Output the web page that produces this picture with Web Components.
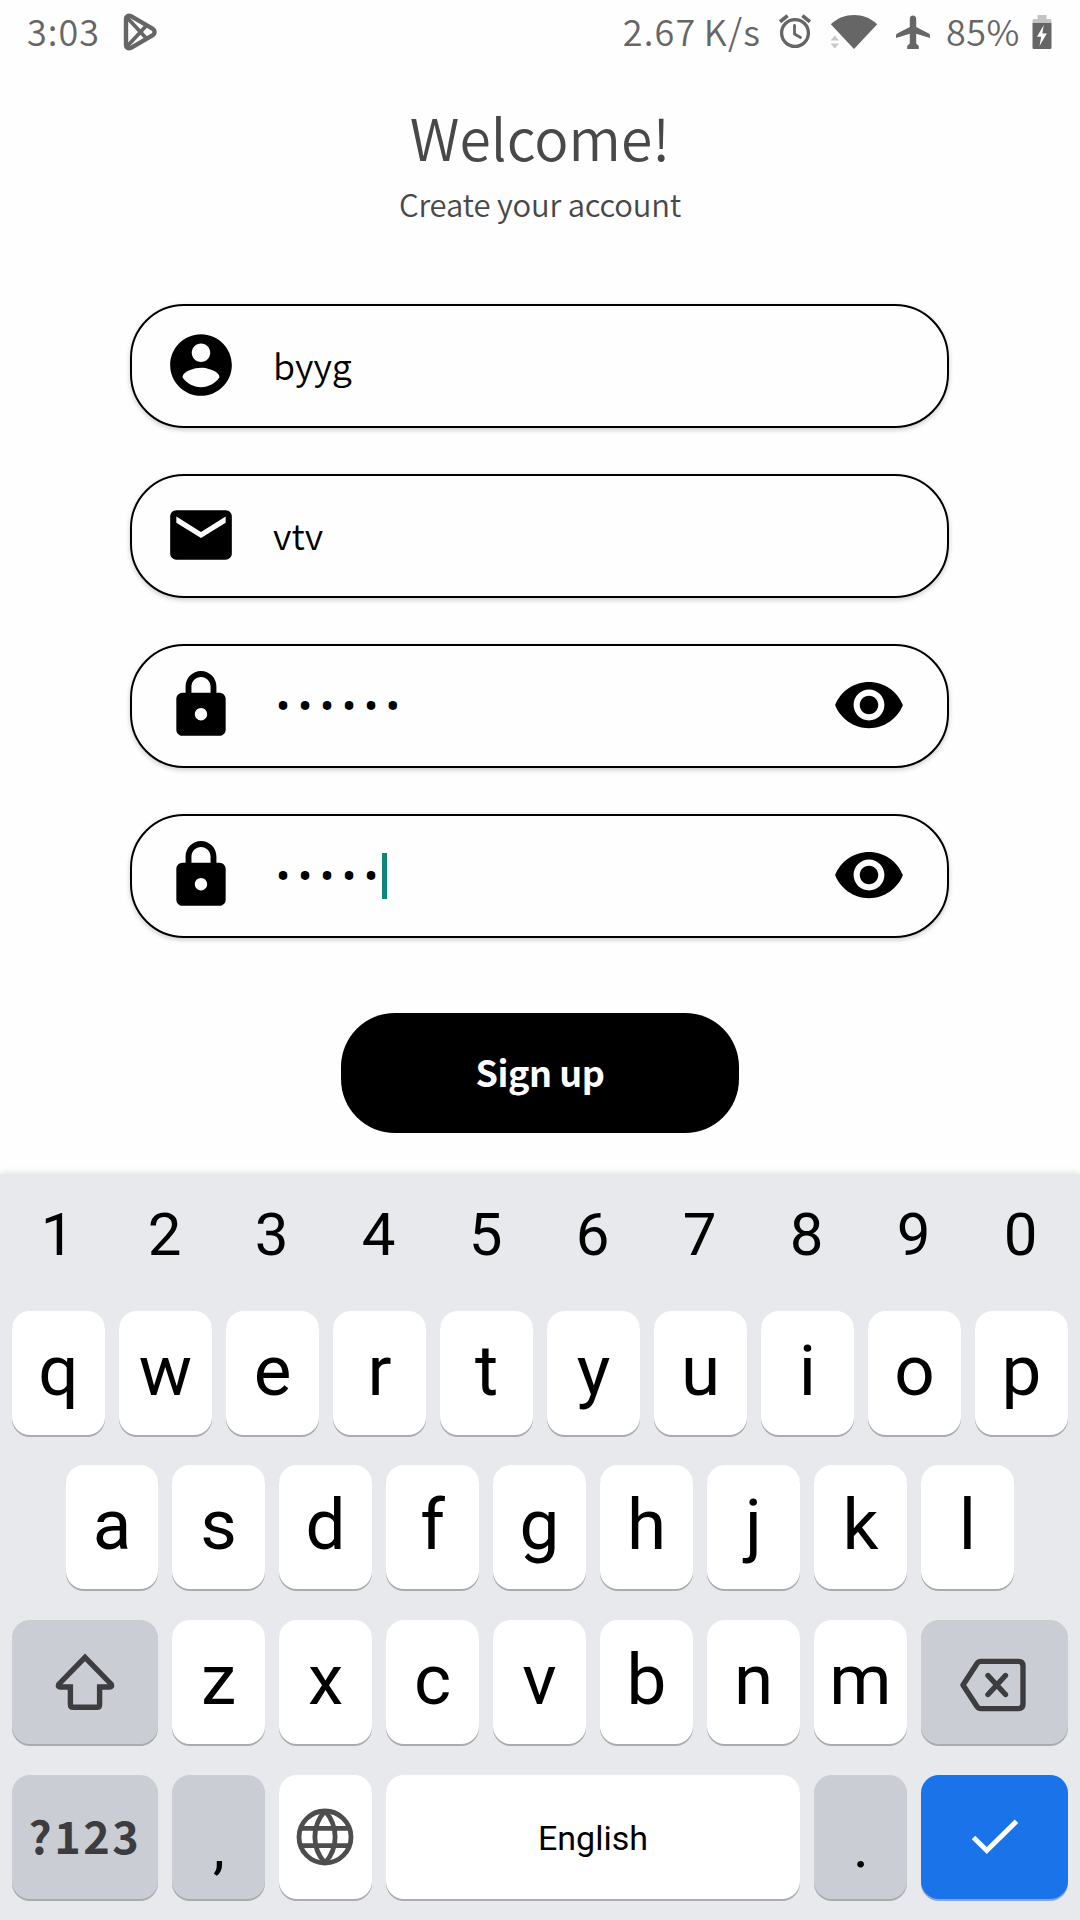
<!DOCTYPE html>
<html lang="en">
<head>
<meta charset="utf-8">
<title>Sign up</title>
<style>
  html, body {
    margin: 0;
    background: #fefefe;
  }
  body {
    font-family: 'Noto Sans CJK SC', 'Noto Sans', sans-serif;
    font-weight: 350;
  }
</style>
</head>
<body>
<signup-screen>
  <status-bar slot="status" time="3:03" speed="2.67 K/s" battery="85%"></status-bar>
  <form-field icon="account" value="byyg"></form-field>
  <form-field icon="mail" value="vtv"></form-field>
  <form-field icon="lock" value="123456" secret></form-field>
  <form-field icon="lock" value="12345" secret focused></form-field>
  <primary-button slot="action">Sign up</primary-button>
  <soft-keyboard slot="keyboard"></soft-keyboard>
</signup-screen>

<script>
/**
 * Icon set. Each entry: viewBox, pixel size and markup.
 */
const ICONS = {
  account: {
    box: '0 0 24 24', w: 74, h: 74,
    body: '<path fill="currentColor" d="M12 2C6.48 2 2 6.48 2 12s4.48 10 10 10 10-4.48 10-10S17.52 2 12 2zm0 3c1.66 0 3 1.34 3 3s-1.34 3-3 3-3-1.34-3-3 1.34-3 3-3zm0 14.2c-2.5 0-4.71-1.28-6-3.22.03-1.99 4-3.08 6-3.08 1.99 0 5.97 1.09 6 3.08-1.29 1.94-3.5 3.22-6 3.22z"/>'
  },
  mail: {
    box: '0 0 24 24', w: 74, h: 74,
    body: '<path fill="currentColor" d="M20 4H4c-1.1 0-1.99.9-1.99 2L2 18c0 1.1.9 2 2 2h16c1.1 0 2-.9 2-2V6c0-1.1-.9-2-2-2zm0 4l-8 5-8-5V6l8 5 8-5v2z"/>'
  },
  lock: {
    box: '0 0 24 24', w: 74, h: 74,
    body: '<path fill="currentColor" d="M18 8h-1V6c0-2.76-2.24-5-5-5S7 3.24 7 6v2H6c-1.1 0-2 .9-2 2v10c0 1.1.9 2 2 2h12c1.1 0 2-.9 2-2V10c0-1.1-.9-2-2-2zm-6 9c-1.1 0-2-.9-2-2s.9-2 2-2 2 .9 2 2-.9 2-2 2zm3.1-9H8.9V6c0-1.71 1.39-3.1 3.1-3.1 1.71 0 3.1 1.39 3.1 3.1v2z"/>'
  },
  eye: {
    box: '0 0 24 24', w: 74, h: 74,
    body: '<path fill="currentColor" d="M12 4.5C7 4.5 2.73 7.61 1 12c1.73 4.39 6 7.5 11 7.5s9.27-3.11 11-7.5c-1.73-4.39-6-7.5-11-7.5zM12 17c-2.76 0-5-2.24-5-5s2.24-5 5-5 5 2.24 5 5-2.24 5-5 5zm0-8c-1.66 0-3 1.34-3 3s1.34 3 3 3 3-1.34 3-3-1.34-3-3-3z"/>'
  },
  play: {
    box: '0 0 34 38', w: 34, h: 38,
    body: `<g fill="none" stroke="currentColor" stroke-width="4.4" stroke-linejoin="round">
      <path d="M3 6.5C3 3 5.5 2 8 3.2L29.5 15.6C32.3 17.4 32.3 20.6 29.5 22.4L8 34.8C5.5 36 3 35 3 31.5Z"/>
      <path stroke-width="3.8" d="M4 4.5L23.5 25.5M4 33.5L23.5 12.5"/></g>`
  },
  alarm: {
    box: '0 0 32 35', w: 32, h: 35,
    body: `<g fill="none" stroke="currentColor">
      <circle cx="16" cy="19" r="13.4" stroke-width="3.3"/>
      <path stroke-width="2.8" stroke-linecap="round" stroke-linejoin="round" d="M15.5 11.5V20L21.5 23.5"/>
      <path stroke-width="3.8" d="M1 7.8L8.6 1.6M31 7.8L23.4 1.6"/></g>`
  },
  wifi: {
    box: '0 0 48 35', w: 48, h: 35,
    body: `<path fill="currentColor" d="M24 35L.8 10.3C7.5 4 15.5 1 24 1s16.5 3 23.2 9.3Z"/>
      <path fill="#c9c9c9" d="M.5 26.5L4.8 21.5L9.1 26.5ZM.5 29.5L4.8 34.5L9.1 29.5Z"/>`
  },
  plane: {
    box: '0 0 34 34', w: 34, h: 34,
    body: '<path fill="currentColor" d="M17 .5C15 .5 13.8 2 13.8 4V12L1.2 18.5Q0 19.2 0 20.5V23L13.8 18.8V28.5L11.2 31V34H22.8V31L20.2 28.5V18.8L34 23V20.5Q34 19.2 32.8 18.5L20.2 12V4C20.2 2 19 .5 17 .5Z"/>'
  },
  battery: {
    box: '0 0 20 34', w: 20, h: 34,
    body: `<path fill="#c4c4c4" d="M5.5 0H14.5V4H18Q19.5 4 19.5 5.5V8H.5V5.5Q.5 4 2 4H5.5Z"/>
      <path fill="currentColor" d="M.5 8H19.5V32.5Q19.5 34 18 34H2Q.5 34 .5 32.5Z"/>
      <path fill="#fefefe" d="M11.8 10L5 21.8H9.2L7.5 31L14.8 18.5H10.3Z"/>`
  },
  shift: {
    box: '0 0 60 58', w: 60, h: 58,
    body: '<path fill="none" stroke="currentColor" stroke-width="5.4" d="M30 4.3L3.8 31.2Q2.5 34 5.5 34H15.4V51.5Q15.4 54.3 18.2 54.3H41.8Q44.6 54.3 44.6 51.5V34H54.5Q57.5 34 56.2 31.2Z"/>'
  },
  backspace: {
    box: '0 0 68 54', w: 68, h: 54,
    body: `<g fill="none" stroke="currentColor" stroke-width="5.4">
      <path stroke-linejoin="round" d="M22 3.4H59.5Q64 3.4 64 7.9V46.1Q64 50.6 59.5 50.6H22Q19.5 50.6 18 48.5L4 27L18 5.5Q19.5 3.4 22 3.4Z"/>
      <path stroke-linecap="round" d="M29 17.5L46.5 36.5M46.5 17.5L29 36.5"/></g>`
  },
  globe: {
    box: '0 0 58 58', w: 58, h: 58,
    body: `<g fill="none" stroke="currentColor" stroke-width="4.8">
      <circle cx="29" cy="29" r="26"/>
      <path d="M29 3C15.5 18 15.5 40 29 55M29 3C42.5 18 42.5 40 29 55M4.5 20.4H53.5M4.5 37.6H53.5"/></g>`
  },
  check: {
    box: '0 0 48 36', w: 48, h: 36,
    body: '<path fill="none" stroke="currentColor" stroke-width="5" d="M2.5 18.5L15.8 31.5L45.5 2.2"/>'
  }
};

class UiIcon extends HTMLElement {
  constructor() {
    super();
    this.attachShadow({ mode: 'open' });
  }

  connectedCallback() {
    const icon = ICONS[this.getAttribute('name')];
    if (!icon) return;
    this.shadowRoot.innerHTML = `
    <style>
      :host { display: block; flex: none; }
      svg { display: block; }
    </style>
    <svg width="${icon.w}" height="${icon.h}" viewBox="${icon.box}">${icon.body}</svg>
  `;
  }
}

class StatusBar extends HTMLElement {
  constructor() {
    super();
    this.attachShadow({ mode: 'open' });
  }

  connectedCallback() {
    this.shadowRoot.innerHTML = `
    <style>
      :host {
        display: flex;
        box-sizing: border-box;
        height: 63px;
        padding: 0 28px 0 27px;
        align-items: center;
        justify-content: space-between;
        color: #666;
        font-size: 36px;
        line-height: 60px;
        white-space: nowrap;
      }
      .group { display: flex; align-items: center; }
      .text { margin-top: -4px; }
      .time { letter-spacing: 1px; margin-right: 23px; }
      .speed { letter-spacing: 1.2px; word-spacing: -2px; margin-right: 18px; }
      .level { letter-spacing: 0.5px; margin: -4px 12px 0 16px; }
      .wifi { margin: 0 18px 0 19px; }
    </style>
    <div class="group">
      <span class="text time">${this.getAttribute('time')}</span>
      <ui-icon name="play"></ui-icon>
    </div>
    <div class="group">
      <span class="text speed">${this.getAttribute('speed')}</span>
      <ui-icon name="alarm"></ui-icon>
      <ui-icon class="wifi" name="wifi"></ui-icon>
      <ui-icon name="plane"></ui-icon>
      <span class="text level">${this.getAttribute('battery')}</span>
      <ui-icon name="battery"></ui-icon>
    </div>
  `;
  }
}

class FormField extends HTMLElement {
  constructor() {
    super();
    this.attachShadow({ mode: 'open' });
  }

  connectedCallback() {
    const secret = this.hasAttribute('secret');
    const value = this.getAttribute('value');
    const text = secret ? '•'.repeat(value.length) : value;

    this.shadowRoot.innerHTML = `
    <style>
      :host {
        display: flex;
        box-sizing: border-box;
        height: 124px;
        padding: 0 41px 2px 32px;
        align-items: center;
        border: 2px solid #000;
        border-radius: 54px;
        background: #fefefe;
        box-shadow: 0 2px 5px rgba(0, 0, 0, 0.2);
        color: #000;
      }
      .value {
        display: flex;
        flex: 1;
        align-items: center;
        margin-left: 35px;
        font-size: 36px;
        line-height: 50px;
      }
      .plain { margin-top: -3px; }
      .dots {
        margin: 3px 0 0 3px;
        font: 400 42px/50px Roboto, sans-serif;
        letter-spacing: 7.8px;
      }
      .caret {
        width: 5px;
        height: 46px;
        margin: 2px 0 0 -4px;
        background: #0f8577;
      }
    </style>
    <ui-icon name="${this.getAttribute('icon')}"></ui-icon>
    <div class="value">
      <span class="${secret ? 'dots' : 'plain'}">${text}</span>
      ${this.hasAttribute('focused') ? '<span class="caret"></span>' : ''}
    </div>
    ${secret ? '<ui-icon name="eye"></ui-icon>' : ''}
  `;
  }
}

class PrimaryButton extends HTMLElement {
  constructor() {
    super();
    this.attachShadow({ mode: 'open' });
    this.shadowRoot.innerHTML = `
    <style>
      :host { display: block; }
      button {
        display: block;
        width: 398px;
        height: 120px;
        padding: 0 0 4px;
        border: none;
        border-radius: 54px;
        background: #000;
        color: #fff;
        font: inherit;
        font-size: 36px;
        font-weight: 700;
        line-height: 50px;
        letter-spacing: -0.5px;
      }
    </style>
    <button type="button"><slot></slot></button>
  `;
  }
}

class KeyCap extends HTMLElement {
  constructor() {
    super();
    this.attachShadow({ mode: 'open' });
    this.shadowRoot.innerHTML = `
    <style>
      :host {
        display: flex;
        flex: none;
        box-sizing: border-box;
        width: 93px;
        height: 124px;
        padding-bottom: 4px;
        align-items: center;
        justify-content: center;
        border-radius: 18px;
        background: #fff;
        box-shadow: 0 2px 0 #a9abae;
        color: #000;
        font: 400 71px/80px Roboto, sans-serif;
      }
      :host([kind="number"]) {
        height: 122px;
        padding: 0 2px 1px 0;
        background: none;
        box-shadow: none;
        font-size: 60px;
      }
      :host([kind="mod"]), :host([kind="punct"]), :host([kind="symbols"]) {
        background: #cbcdd5;
        color: #3d3d40;
      }
      :host([kind="mod"]) { padding-bottom: 0; }
      :host([kind="punct"]) {
        padding: 20px 0 0 1px;
        color: #000;
        font-size: 60px;
      }
      :host([kind="symbols"]) {
        font: 700 45px/80px 'Noto Sans CJK SC', sans-serif;
        letter-spacing: 2.5px;
      }
      :host([kind="globe"]) { padding: 0 2px 0 0; color: #4d4d4d; }
      :host([kind="space"]) { padding: 1px 0 0; font-size: 34px; }
      :host([kind="enter"]) {
        padding: 0;
        background: #1a73e8;
        box-shadow: 0 2px 0 #8ba6d3;
        color: #fff;
      }
    </style>
    <slot></slot>
  `;
  }

  connectedCallback() {
    if (this.hasAttribute('width')) {
      this.style.width = `${this.getAttribute('width')}px`;
    }
  }
}

const letters = row => [...row].map(ch => `<key-cap>${ch}</key-cap>`).join('');

class SoftKeyboard extends HTMLElement {
  constructor() {
    super();
    this.attachShadow({ mode: 'open' });
  }

  connectedCallback() {
    this.shadowRoot.innerHTML = `
    <style>
      :host {
        display: flex;
        box-sizing: border-box;
        height: 746px;
        flex-direction: column;
        gap: 31px;
        background: #e8e9ed;
        box-shadow: 0 -1px 7px rgba(0, 0, 0, 0.12);
      }
      .row { display: flex; gap: 14px; padding-left: 12px; }
      .numbers { margin-bottom: -16px; }
      .top { margin-bottom: -1px; }
      .home { padding-left: 66px; }
    </style>
    <div class="row numbers">${[...'1234567890'].map(n => `<key-cap kind="number">${n}</key-cap>`).join('')}</div>
    <div class="row top">${letters('qwertyuiop')}</div>
    <div class="row home">
      <key-cap width="92">a</key-cap>
      ${letters('sdfghjkl')}
    </div>
    <div class="row">
      <key-cap kind="mod" width="146"><ui-icon name="shift"></ui-icon></key-cap>
      ${letters('zxcvbnm')}
      <key-cap kind="mod" width="147"><ui-icon name="backspace" style="margin: 5px 3px 0 0"></ui-icon></key-cap>
    </div>
    <div class="row">
      <key-cap kind="symbols" width="146">?123</key-cap>
      <key-cap kind="punct">,</key-cap>
      <key-cap kind="globe"><ui-icon name="globe"></ui-icon></key-cap>
      <key-cap kind="space" width="414">English</key-cap>
      <key-cap kind="punct">.</key-cap>
      <key-cap kind="enter" width="147"><ui-icon name="check"></ui-icon></key-cap>
    </div>
  `;
  }
}

class SignupScreen extends HTMLElement {
  constructor() {
    super();
    this.attachShadow({ mode: 'open' });
    this.shadowRoot.innerHTML = `
    <style>
      :host {
        display: flex;
        width: 1080px;
        height: 1920px;
        flex-direction: column;
        overflow: hidden;
        color: #484848;
      }
      main {
        display: flex;
        flex: 1;
        flex-direction: column;
        align-items: center;
      }
      h1 {
        margin: 38px 0 0;
        font-size: 57px;
        font-weight: 350;
        line-height: 70px;
      }
      p {
        margin: 13px 0 0;
        font-size: 31px;
        line-height: 40px;
        letter-spacing: -0.2px;
      }
      form {
        display: flex;
        width: 819px;
        margin: 80px 1px 75px 0;
        flex-direction: column;
        gap: 46px;
      }
    </style>
    <slot name="status"></slot>
    <main>
      <h1>Welcome!</h1>
      <p>Create your account</p>
      <form><slot></slot></form>
      <slot name="action"></slot>
    </main>
    <slot name="keyboard"></slot>
  `;
  }
}

customElements.define('ui-icon', UiIcon);
customElements.define('status-bar', StatusBar);
customElements.define('form-field', FormField);
customElements.define('primary-button', PrimaryButton);
customElements.define('key-cap', KeyCap);
customElements.define('soft-keyboard', SoftKeyboard);
customElements.define('signup-screen', SignupScreen);
</script>
</body>
</html>
